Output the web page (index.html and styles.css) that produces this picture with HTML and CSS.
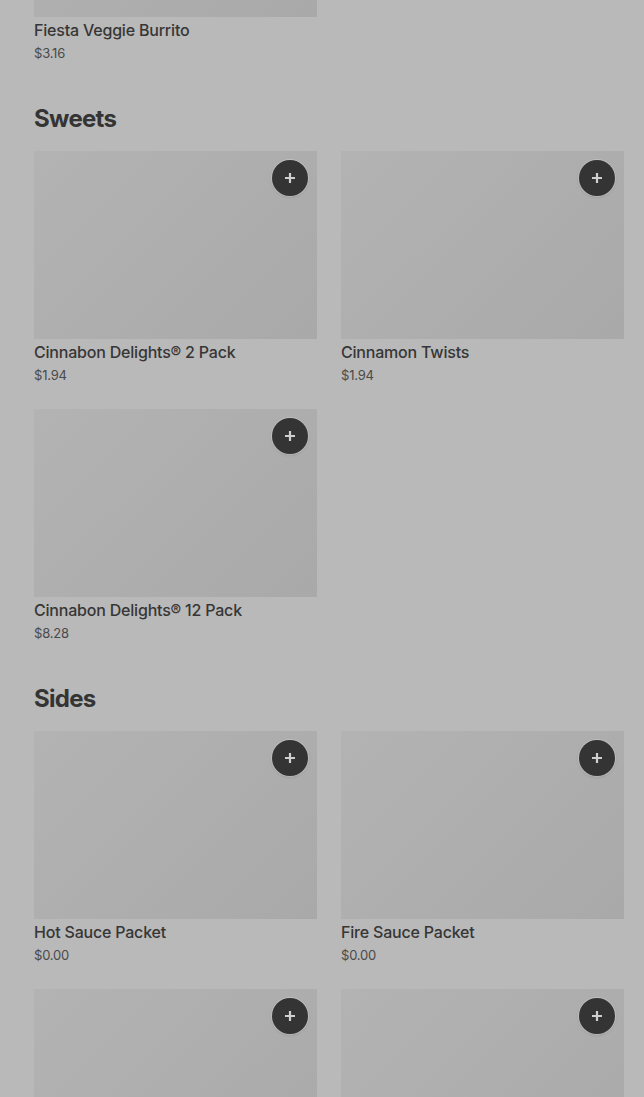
FILE: index.html
```html
<!DOCTYPE html>
<html>
<head>
<meta charset="utf-8">
<link rel="stylesheet" href="styles.css">
</head>
<body>
<main class="menu">
  <section class="section first">
    <div class="grid">
      <article class="item">
        <div class="thumb"></div>
        <h3 class="name">Fiesta Veggie Burrito</h3>
        <p class="price">$3.16</p>
      </article>
    </div>
  </section>

  <section class="section">
    <h2 class="heading">Sweets</h2>
    <div class="grid">
      <article class="item">
        <div class="thumb"><button class="add" aria-label="Add"><svg viewBox="0 0 16 16" width="16" height="16"><path d="M8 3v10M3 8h10" stroke-width="2.2" fill="none"/></svg></button></div>
        <h3 class="name">Cinnabon Delights® 2 Pack</h3>
        <p class="price">$1.94</p>
      </article>
      <article class="item">
        <div class="thumb"><button class="add" aria-label="Add"><svg viewBox="0 0 16 16" width="16" height="16"><path d="M8 3v10M3 8h10" stroke-width="2.2" fill="none"/></svg></button></div>
        <h3 class="name">Cinnamon Twists</h3>
        <p class="price">$1.94</p>
      </article>
      <article class="item">
        <div class="thumb"><button class="add" aria-label="Add"><svg viewBox="0 0 16 16" width="16" height="16"><path d="M8 3v10M3 8h10" stroke-width="2.2" fill="none"/></svg></button></div>
        <h3 class="name">Cinnabon Delights® 12 Pack</h3>
        <p class="price">$8.28</p>
      </article>
    </div>
  </section>

  <section class="section">
    <h2 class="heading">Sides</h2>
    <div class="grid">
      <article class="item">
        <div class="thumb"><button class="add" aria-label="Add"><svg viewBox="0 0 16 16" width="16" height="16"><path d="M8 3v10M3 8h10" stroke-width="2.2" fill="none"/></svg></button></div>
        <h3 class="name">Hot Sauce Packet</h3>
        <p class="price">$0.00</p>
      </article>
      <article class="item">
        <div class="thumb"><button class="add" aria-label="Add"><svg viewBox="0 0 16 16" width="16" height="16"><path d="M8 3v10M3 8h10" stroke-width="2.2" fill="none"/></svg></button></div>
        <h3 class="name">Fire Sauce Packet</h3>
        <p class="price">$0.00</p>
      </article>
      <article class="item">
        <div class="thumb"><button class="add" aria-label="Add"><svg viewBox="0 0 16 16" width="16" height="16"><path d="M8 3v10M3 8h10" stroke-width="2.2" fill="none"/></svg></button></div>
      </article>
      <article class="item">
        <div class="thumb"><button class="add" aria-label="Add"><svg viewBox="0 0 16 16" width="16" height="16"><path d="M8 3v10M3 8h10" stroke-width="2.2" fill="none"/></svg></button></div>
      </article>
    </div>
  </section>
</main>
</body>
</html>
```

FILE: styles.css
```css
html, body {
  margin: 0;
  padding: 0;
  background: #b9b9b9;
  overflow: hidden;
}

body {
  font-family: Inter, "Noto Sans", sans-serif;
  color: #363636;
  height: 1097px;
}

.menu {
  padding: 0 20px 0 34px;
  margin-top: -171px;
}

.section {
  margin-bottom: 41px;
}

.heading {
  margin: 0 0 16px;
  font-size: 24px;
  line-height: 32px;
  font-weight: 700;
  letter-spacing: -0.7px;
  color: #343434;
}

.grid {
  display: grid;
  grid-template-columns: 283px 283px;
  column-gap: 24px;
  row-gap: 25px;
}

.item {
  display: flex;
  flex-direction: column;
}

.thumb {
  position: relative;
  height: 188px;
  background: linear-gradient(135deg, #b3b3b3 0%, #aeaeae 50%, #a9a9a9 100%);
}

.add {
  position: absolute;
  top: 9px;
  right: 9px;
  width: 36px;
  height: 36px;
  border-radius: 50%;
  border: none;
  padding: 0;
  background: #343434;
  box-shadow: 0 0 0 1px rgba(255,255,255,0.25), 0 1px 3px rgba(0,0,0,0.15);
  display: flex;
  align-items: center;
  justify-content: center;
}

.add svg path {
  stroke: #cfcfcf;
}

.name {
  margin: 2px 0 0;
  font-size: 16px;
  line-height: 22px;
  font-weight: 500;
  letter-spacing: -0.2px;
  color: #363636;
}

.price {
  margin: 3px 0 0;
  font-size: 13px;
  line-height: 18px;
  font-weight: 400;
  letter-spacing: -0.2px;
  color: #4a4a4a;
}
```
